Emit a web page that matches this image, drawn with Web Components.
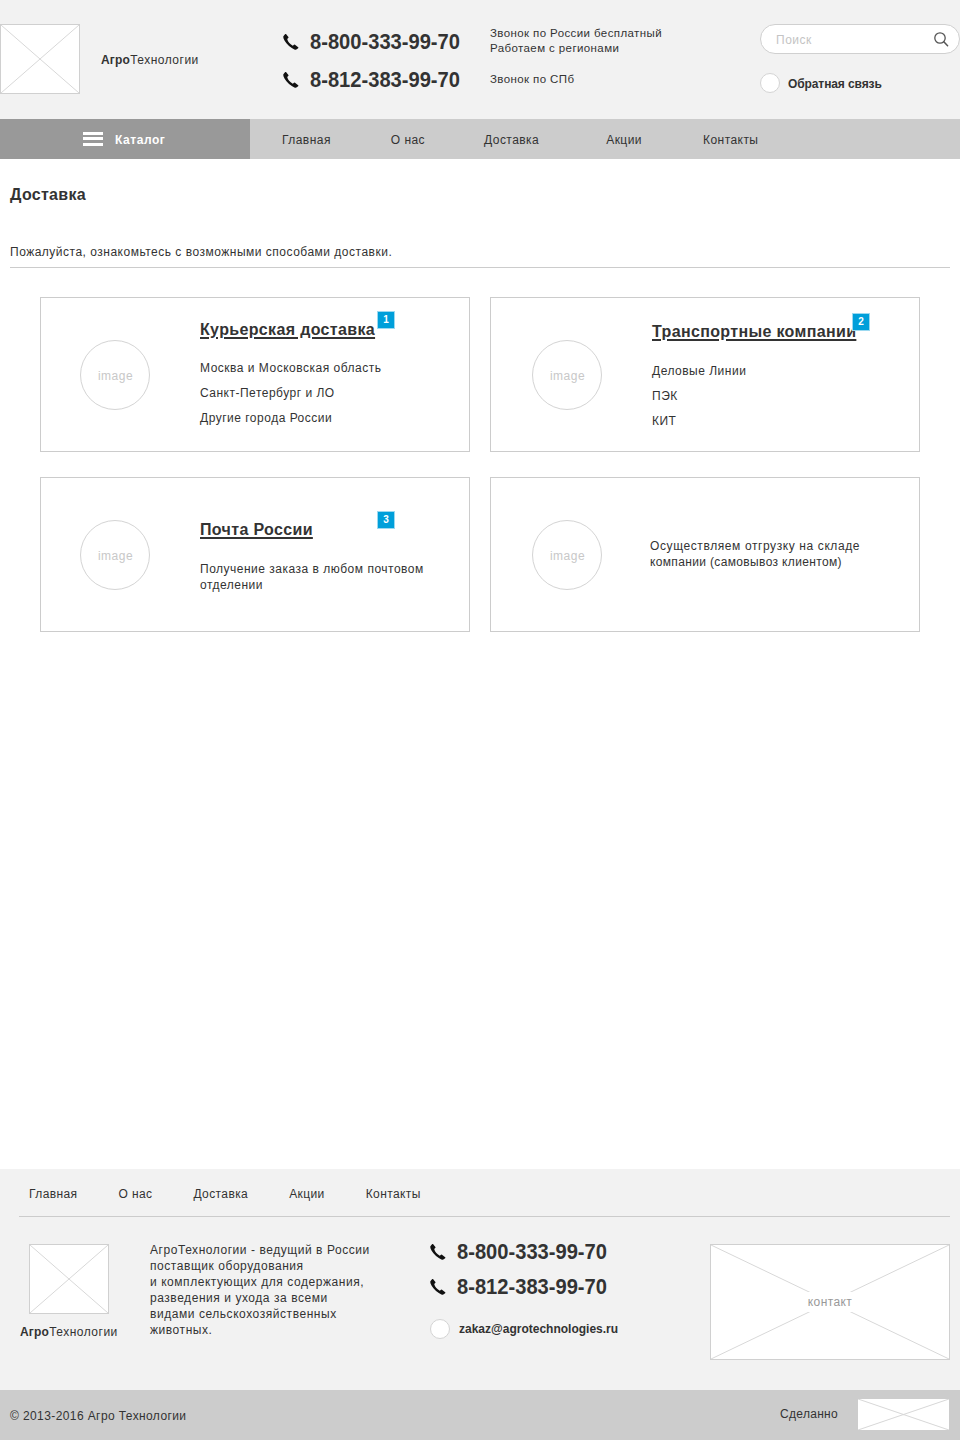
<!DOCTYPE html>
<html lang="ru">
<head>
<meta charset="utf-8">
<title>Доставка</title>
<style>
  html, body { margin: 0; padding: 0; background: #fff; }
  body { font: 12px/16px "Liberation Sans", Arial, sans-serif; color: #333; letter-spacing: .5px; }
</style>
</head>
<body>
<agro-page>
  <agro-header slot="header"></agro-header>
  <agro-nav slot="nav"></agro-nav>
  <delivery-section slot="main"></delivery-section>
  <agro-footer slot="footer"></agro-footer>
</agro-page>

<script>
const PHONE = `<svg width="16" height="16" viewBox="0 0 16 16" aria-hidden="true">
  <path d="M3 0 L5.4 3 Q5.7 3.6 5.2 4.1 L4.2 5 Q5.2 9 9.8 11.8 L11 10.7 Q11.5 10.4 12 10.8 L15.2 13.2 Q15.7 13.7 15.1 14.2 L13.8 15.3 Q12.8 16 11.4 15.4 Q5 12.6 1.5 6.6 Q-.2 3.6 .4 2.2 L1.8 .4 Q2.5 -.3 3 0 Z" fill="#111"/>
</svg>`;

class AgroPage extends HTMLElement {
  constructor() {
    super();
    this.attachShadow({mode: 'open'}).innerHTML = `
      <style>
        :host { display: flex; flex-direction: column; width: 960px; height: 1440px; overflow: hidden; }
        .main { flex: 1; }
      </style>
      <slot name="header"></slot>
      <slot name="nav"></slot>
      <div class="main"><slot name="main"></slot></div>
      <slot name="footer"></slot>
    `;
  }
}

// grey crossed box that stands in for a picture
class AgroPlaceholder extends HTMLElement {
  constructor() {
    super();
    this.attachShadow({mode: 'open'}).innerHTML = `
      <style>
        :host { display: block; position: relative; box-sizing: border-box; background: #fff; border: 1px solid #d0d0d0; }
        :host([bare]) { border: 0; }
        svg { display: block; width: 100%; height: 100%; }
        .label { position: absolute; inset: 0; display: flex; align-items: center; justify-content: center; color: #999; letter-spacing: .4px; }
        ::slotted(*) { background: #fff; padding: 2px 0; }
      </style>
      <svg viewBox="0 0 100 100" preserveAspectRatio="none">
        <path d="M0 0 L100 100 M100 0 L0 100" stroke="#d8d8d8" stroke-width="1" vector-effect="non-scaling-stroke" fill="none"/>
      </svg>
      <div class="label"><slot></slot></div>
    `;
  }
}

class PhoneLine extends HTMLElement {
  constructor() {
    super();
    this.attachShadow({mode: 'open'}).innerHTML = `
      <style>
        :host { display: flex; align-items: center; gap: 11px; height: 24px; }
        svg { flex: none; }
        span { font: bold 22px/24px "Liberation Sans", Arial, sans-serif; color: #333; letter-spacing: 0; display: inline-block; transform: scaleX(.915); transform-origin: left center; white-space: nowrap; }
      </style>
      ${PHONE}
      <span><slot></slot></span>
    `;
  }
}

class AgroBrand extends HTMLElement {
  constructor() {
    super();
    this.attachShadow({mode: 'open'}).innerHTML = `
      <style>
        :host { display: block; white-space: nowrap; color: #333; }
        b { font-weight: bold; letter-spacing: .2px; }
      </style>
      <b>Агро</b>Технологии
    `;
  }
}

class RoundDot extends HTMLElement {
  constructor() {
    super();
    this.attachShadow({mode: 'open'}).innerHTML = `
      <style>
        :host { display: block; flex: none; box-sizing: border-box; width: 20px; height: 20px; border-radius: 50%; background: #fff; border: 1px solid #d4d4d4; }
      </style>
    `;
  }
}

class AgroHeader extends HTMLElement {
  constructor() {
    super();
    this.attachShadow({mode: 'open'}).innerHTML = `
      <style>
        :host { display: grid; grid-template-columns: 80px 182px 207px 291px 200px; box-sizing: border-box; height: 119px; padding-top: 24px; background: #f2f2f2; }
        .logo { height: 70px; }
        .brand { padding: 28px 0 0 21px; }
        .phones { padding: 6px 0 0 21px; display: flex; flex-direction: column; gap: 14px; }
        .notes { padding: 2px 0 0 21px; font-size: 11.5px; line-height: 15px; letter-spacing: .4px; color: #333; }
        .notes p { margin: 0 0 16px; }
        .search { box-sizing: border-box; width: 200px; height: 30px; border: 1px solid #d0d0d0; border-radius: 15px; background: #fff; display: flex; align-items: center; justify-content: space-between; padding: 1px 10px 0 15px; color: #c4c4c4; }
        .feedback { display: flex; align-items: center; gap: 8px; margin-top: 19px; font-weight: bold; letter-spacing: -.1px; color: #333; }
        .feedback span { padding-top: 2px; }
        svg { display: block; margin-top: -1px; }
      </style>
      <agro-placeholder class="logo"></agro-placeholder>
      <agro-brand class="brand"></agro-brand>
      <div class="phones">
        <phone-line>8-800-333-99-70</phone-line>
        <phone-line>8-812-383-99-70</phone-line>
      </div>
      <div class="notes">
        <p>Звонок по России бесплатный<br>Работаем с регионами</p>
        <p>Звонок по СПб</p>
      </div>
      <div>
        <div class="search">
          <span>Поиск</span>
          <svg width="16" height="16" viewBox="0 0 16 16" aria-hidden="true"><circle cx="7" cy="7" r="5.2" fill="none" stroke="#555" stroke-width="1.3"/><path d="M10.8 10.8 L14.6 14.8" stroke="#555" stroke-width="1.5" stroke-linecap="round"/></svg>
        </div>
        <div class="feedback"><round-dot></round-dot><span>Обратная связь</span></div>
      </div>
    `;
  }
}

class AgroNav extends HTMLElement {
  constructor() {
    super();
    this.attachShadow({mode: 'open'}).innerHTML = `
      <style>
        :host { display: flex; height: 40px; background: #ccc; line-height: 43px; letter-spacing: .45px; color: #333; }
        .catalog { box-sizing: border-box; width: 250px; background: #999; color: #fff; font-weight: bold; letter-spacing: .55px; display: flex; align-items: center; gap: 12px; padding-left: 83px; }
        .catalog i { display: block; width: 20px; height: 14px; background: repeating-linear-gradient(#fff 0 3px, transparent 3px 5.5px); }
        .catalog span { padding-top: 2px; }
        .links { display: flex; gap: 60px; padding-left: 32px; }
        .ship { margin-left: -1px; }
        .promo { margin-left: 7px; }
        .last { margin-left: 1px; }
        a { color: inherit; text-decoration: none; }
      </style>
      <div class="catalog"><i></i><span>Каталог</span></div>
      <div class="links">
        <a href="#">Главная</a><a href="#">О нас</a><a class="ship" href="#">Доставка</a><a class="promo" href="#">Акции</a><a class="last" href="#">Контакты</a>
      </div>
    `;
  }
}

class DeliveryCard extends HTMLElement {
  constructor() {
    super();
    const num = this.getAttribute('num');
    this.attachShadow({mode: 'open'}).innerHTML = `
      <style>
        :host { display: flex; align-items: center; position: relative; box-sizing: border-box; height: 155px; border: 1px solid #ccc; padding-left: var(--inset, 39px); background: #fff; }
        .round { flex: none; box-sizing: border-box; width: 70px; height: 70px; border-radius: 50%; border: 1px solid #d4d4d4; display: flex; align-items: center; justify-content: center; padding: 2px 0 0 1px; color: #c8c8c8; }
        .text { margin-left: var(--gap, 50px); padding-top: var(--shift, 2px); padding-bottom: var(--lift, 0); flex: 1; }
        .badge { position: absolute; left: var(--bx); top: var(--by); box-sizing: border-box; width: 18px; height: 18px; background: #009fda; border: 1px solid #9cd9f0; color: #fff; font: bold 10px/15px "Liberation Sans", Arial, sans-serif; text-align: center; letter-spacing: 0; }
        ::slotted(h3) { margin: 0 0 var(--title-gap, 16px); font: bold 16px/20px "Liberation Sans", Arial, sans-serif; color: #333; letter-spacing: .35px; text-decoration: underline; text-decoration-thickness: 2px; text-underline-offset: 2px; }
        ::slotted(p) { margin: 0; }
        ::slotted(ul) { margin: 0; padding: 0; list-style: none; line-height: 25px; }
      </style>
      <div class="round">image</div>
      <div class="text"><slot></slot></div>
      ${num ? `<div class="badge">${num}</div>` : ''}
    `;
  }
}

class DeliverySection extends HTMLElement {
  constructor() {
    super();
    this.attachShadow({mode: 'open'}).innerHTML = `
      <style>
        :host { display: block; padding: 26px 10px 0; }
        h1 { margin: 0; font: bold 16px/20px "Liberation Sans", Arial, sans-serif; color: #333; letter-spacing: .3px; }
        .intro { margin: 39px 0 0; padding-bottom: 7px; border-bottom: 1px solid #ccc; }
        .grid { display: grid; grid-template-columns: 430px 430px; column-gap: 20px; row-gap: 25px; padding: 29px 0 0 30px; }
        .wide { letter-spacing: .6px; }
        .tight { letter-spacing: .35px; }
      </style>
      <h1>Доставка</h1>
      <p class="intro">Пожалуйста, ознакомьтесь с возможными способами доставки.</p>
      <div class="grid">
        <delivery-card num="1" style="--bx:336px;--by:13px">
          <h3>Курьерская доставка</h3>
          <ul><li>Москва и Московская область</li><li>Санкт-Петербург и ЛО</li><li>Другие города России</li></ul>
        </delivery-card>
        <delivery-card num="2" style="--bx:361px;--by:15px;--inset:41px;--shift:7px;--title-gap:17px">
          <h3>Транспортные компании</h3>
          <ul><li>Деловые Линии</li><li>ПЭК</li><li>КИТ</li></ul>
        </delivery-card>
        <delivery-card num="3" style="--bx:336px;--by:33px;--shift:4px;--title-gap:21px">
          <h3>Почта России</h3>
          <p>Получение заказа в любом почтовом<br>отделении</p>
        </delivery-card>
        <delivery-card style="--inset:41px;--gap:48px;--shift:0px;--lift:2px">
          <p><span class="wide">Осуществляем отгрузку на складе</span><br><span class="tight">компании (самовывоз клиентом)</span></p>
        </delivery-card>
      </div>
    `;
  }
}

class AgroFooter extends HTMLElement {
  constructor() {
    super();
    this.attachShadow({mode: 'open'}).innerHTML = `
      <style>
        :host { display: block; }
        .top { box-sizing: border-box; height: 221px; background: #f2f2f2; padding: 0 10px 0 19px; }
        .links { display: flex; gap: 41px; padding: 17px 0 0 10px; height: 30px; border-bottom: 1px solid #ccc; letter-spacing: .4px; }
        a { color: inherit; text-decoration: none; }
        .cols { display: grid; grid-template-columns: 131px 280px 280px 240px; padding-top: 27px; }
        .about .logo { width: 80px; height: 70px; margin-left: 10px; }
        .about agro-brand { margin: 10px 0 0 1px; }
        .text { margin: -2px 0 0; letter-spacing: .55px; }
        .contacts { display: flex; flex-direction: column; gap: 11px; margin-top: -4px; }
        .mail { display: flex; align-items: center; gap: 9px; margin-top: 9px; font-weight: bold; letter-spacing: 0; }
        .map { height: 116px; }
        .copy { display: flex; align-items: center; justify-content: space-between; box-sizing: border-box; height: 50px; background: #ccc; padding: 0 11px 2px 10px; }
        .copy .made { display: flex; align-items: center; gap: 20px; letter-spacing: .3px; }
        .stamp { width: 91px; height: 31px; }
        .year { letter-spacing: .4px; padding-top: 4px; }
      </style>
      <div class="top">
        <nav class="links"><a href="#">Главная</a><a href="#">О нас</a><a href="#">Доставка</a><a href="#">Акции</a><a href="#">Контакты</a></nav>
        <div class="cols">
          <div class="about"><agro-placeholder class="logo"></agro-placeholder><agro-brand></agro-brand></div>
          <p class="text">АгроТехнологии - ведущий в России<br>поставщик оборудования<br>и комплектующих для содержания,<br>разведения и ухода за всеми<br>видами сельскохозяйственных<br>животных.</p>
          <div class="contacts">
            <phone-line>8-800-333-99-70</phone-line>
            <phone-line>8-812-383-99-70</phone-line>
            <div class="mail"><round-dot></round-dot><span>zakaz@agrotechnologies.ru</span></div>
          </div>
          <agro-placeholder class="map"><span>контакт</span></agro-placeholder>
        </div>
      </div>
      <div class="copy">
        <span class="year">© 2013-2016 Агро Технологии</span>
        <div class="made"><span>Сделанно</span><agro-placeholder class="stamp" bare></agro-placeholder></div>
      </div>
    `;
  }
}

customElements.define('agro-placeholder', AgroPlaceholder);
customElements.define('phone-line', PhoneLine);
customElements.define('agro-brand', AgroBrand);
customElements.define('round-dot', RoundDot);
customElements.define('agro-header', AgroHeader);
customElements.define('agro-nav', AgroNav);
customElements.define('delivery-card', DeliveryCard);
customElements.define('delivery-section', DeliverySection);
customElements.define('agro-footer', AgroFooter);
customElements.define('agro-page', AgroPage);
</script>
</body>
</html>
